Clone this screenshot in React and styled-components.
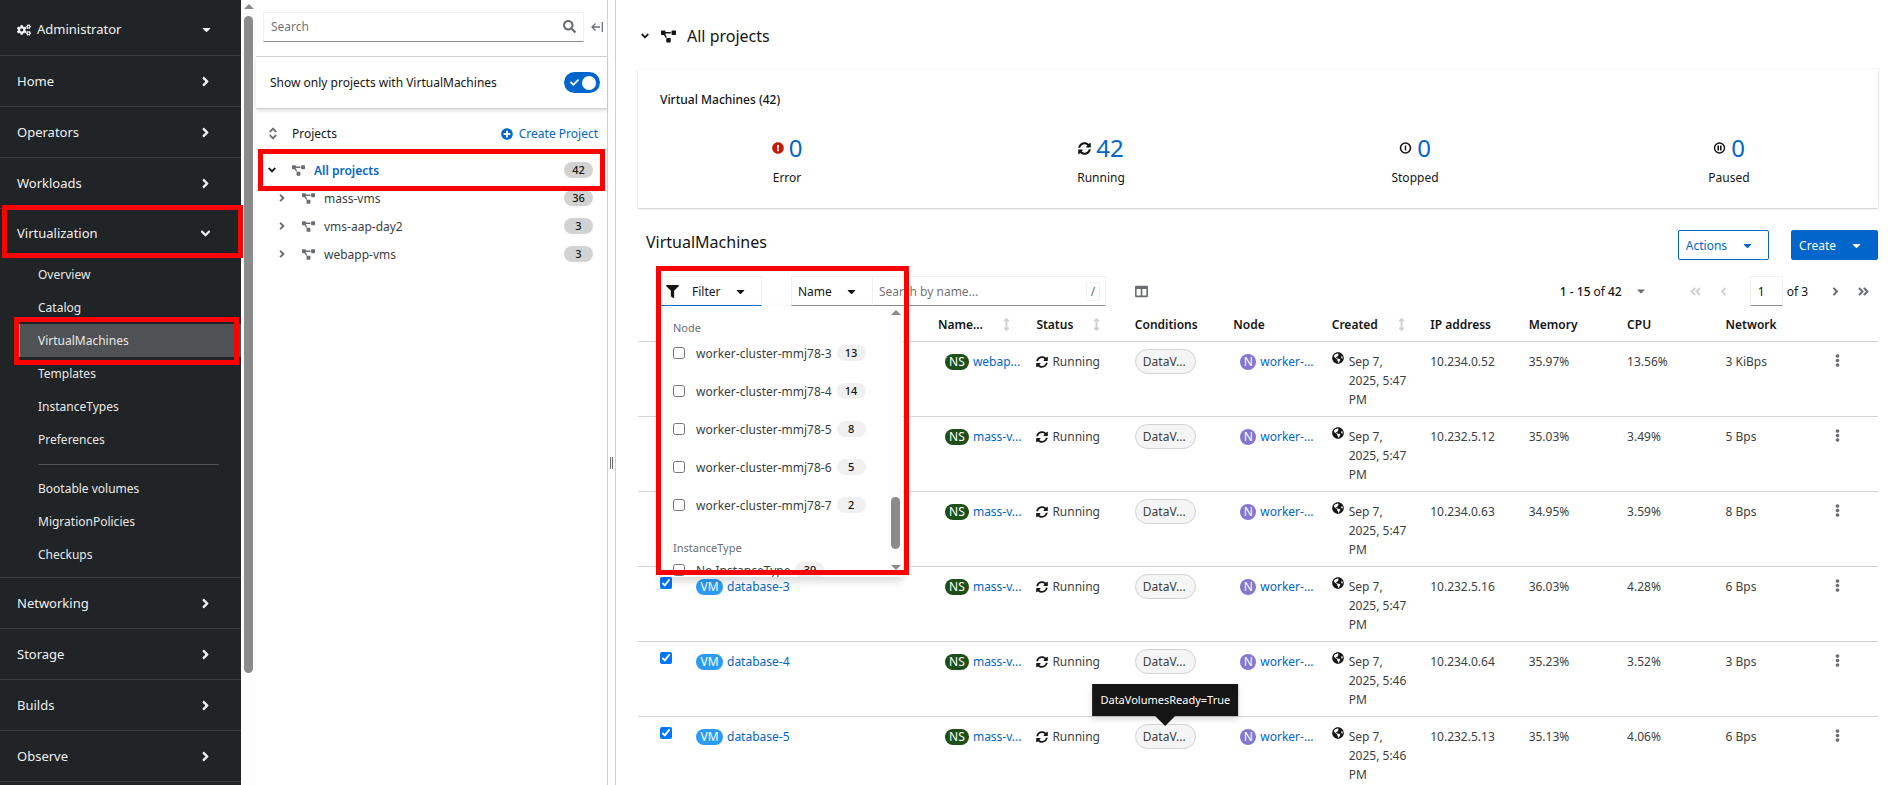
import React, { useState } from 'react';
import styled, { createGlobalStyle, css } from 'styled-components';
import {
    FaAngleDoubleLeft,
    FaAngleDoubleRight,
    FaAngleDown,
    FaAngleLeft,
    FaAngleRight,
    FaAngleUp,
    FaArrowsAltV,
    FaCaretDown,
    FaCheck,
    FaCogs,
    FaColumns,
    FaEllipsisV,
    FaExclamationCircle,
    FaFilter,
    FaGlobeAmericas,
    FaPlusCircle,
    FaProjectDiagram,
    FaSearch,
    FaSyncAlt
} from 'react-icons/fa';

const navTop = ['Home', 'Operators', 'Workloads'];
const navBottom = ['Networking', 'Storage', 'Builds', 'Observe'];
const virtLinks = ['Overview', 'Catalog', 'VirtualMachines', 'Templates', 'InstanceTypes', 'Preferences'];
const virtExtraLinks = ['Bootable volumes', 'MigrationPolicies', 'Checkups'];

const projects = [
    { name: 'mass-vms', count: 36 },
    { name: 'vms-aap-day2', count: 3 },
    { name: 'webapp-vms', count: 3 }
];

const nodes = [
    { name: 'worker-cluster-mmj78-3', count: 13 },
    { name: 'worker-cluster-mmj78-4', count: 14 },
    { name: 'worker-cluster-mmj78-5', count: 8 },
    { name: 'worker-cluster-mmj78-6', count: 5 },
    { name: 'worker-cluster-mmj78-7', count: 2 }
];

const vms = [
    { id: 1, ns: 'webap...', time: '5:47', ip: '10.234.0.52', memory: '35.97%', cpu: '13.56%', network: '3 KiBps' },
    { id: 2, ns: 'mass-v...', time: '5:47', ip: '10.232.5.12', memory: '35.03%', cpu: '3.49%', network: '5 Bps' },
    { id: 3, ns: 'mass-v...', time: '5:47', ip: '10.234.0.63', memory: '34.95%', cpu: '3.59%', network: '8 Bps' },
    { id: 4, name: 'database-3', ns: 'mass-v...', time: '5:47', ip: '10.232.5.16', memory: '36.03%', cpu: '4.28%', network: '6 Bps' },
    { id: 5, name: 'database-4', ns: 'mass-v...', time: '5:46', ip: '10.234.0.64', memory: '35.23%', cpu: '3.52%', network: '3 Bps' },
    { id: 6, name: 'database-5', ns: 'mass-v...', time: '5:46', ip: '10.232.5.13', memory: '35.13%', cpu: '4.06%', network: '6 Bps', tooltip: 'DataVolumesReady=True' }
];

const columns = [
    { label: 'Name...', sort: true },
    { label: 'Status', sort: true },
    { label: 'Conditions' },
    { label: 'Node' },
    { label: 'Created', sort: true },
    { label: 'IP address' },
    { label: 'Memory' },
    { label: 'CPU' },
    { label: 'Network' }
];

const OffIcon = () => (
    <svg width="13" height="12" viewBox="0 0 13 12" fill="none" stroke="#151515">
        <circle cx="6.5" cy="6" r="5" strokeWidth="1.6" />
        <path d="M6.5 3.5v5" strokeWidth="1.4" />
    </svg>
);

const PausedIcon = () => (
    <svg width="13" height="12" viewBox="0 0 13 12" fill="none" stroke="#151515">
        <circle cx="6.5" cy="6" r="5" strokeWidth="1.4" />
        <path d="M5.2 3.5v5M7.8 3.5v5" strokeWidth="1.6" />
    </svg>
);

const CollapseIcon = () => (
    <svg width="12" height="12" viewBox="0 0 12 12" fill="none" stroke="#6a6e73" strokeWidth="1.3">
        <path d="M9 6H1M4.5 2.5L1 6l3.5 3.5M11.3 1v10" />
    </svg>
);

const Scrollbar = ({ start, size, endArrow }) => (
    <Track>
        <Arrow />
        <Rail>
            <Spacer $grow={start} />
            <Thumb $grow={size} />
            <Spacer $grow={100 - start - size} />
        </Rail>
        {endArrow && <Arrow $down />}
    </Track>
);

const Sidebar = () => (
    <Nav>
        <Perspective>
            <FaCogs size={14} />
            <span>Administrator</span>
            <FaCaretDown size={13} />
        </Perspective>
        {navTop.map((label) => (
            <NavSection key={label}><span>{label}</span><FaAngleRight size={15} /></NavSection>
        ))}
        <NavSection $open>
            <span>Virtualization</span><FaAngleDown size={15} />
            <Highlight $top={-4} $right={-2} $bottom={0} $left={2} />
        </NavSection>
        <SubNav>
            {virtLinks.map((label) => (
                <SubLink key={label} href="#" $active={label === 'VirtualMachines'}>
                    {label}
                    {label === 'VirtualMachines' && <Highlight $top={-7} $right={2} $bottom={-8} $left={-6} />}
                </SubLink>
            ))}
            <Divider />
            {virtExtraLinks.map((label) => <SubLink key={label} href="#">{label}</SubLink>)}
        </SubNav>
        {navBottom.map((label) => (
            <NavSection key={label}><span>{label}</span><FaAngleRight size={15} /></NavSection>
        ))}
    </Nav>
);

const ProjectTree = () => {
    const [onlyVms, setOnlyVms] = useState(true);
    return (
        <TreePane>
            <TreeSearch>
                <SearchBox>
                    <input type="text" placeholder="Search" aria-label="Search projects" />
                    <FaSearch size={13} />
                </SearchBox>
                <IconButton aria-label="Collapse panel"><CollapseIcon /></IconButton>
            </TreeSearch>
            <TreeToggle>
                <label htmlFor="only-vms">Show only projects with VirtualMachines</label>
                <SwitchTrack>
                    <input id="only-vms" type="checkbox" role="switch" checked={onlyVms} onChange={() => setOnlyVms(!onlyVms)} />
                    <FaCheck size={9} />
                    <SwitchKnob />
                </SwitchTrack>
            </TreeToggle>
            <TreeHead>
                <ExpandAll aria-label="Expand all"><FaAngleUp size={12} /><FaAngleDown size={12} /></ExpandAll>
                <span>Projects</span>
                <CreateProject><FaPlusCircle size={12} />Create Project</CreateProject>
            </TreeHead>
            <TreeItem $root>
                <FaAngleDown size={12} color="#151515" />
                <FaProjectDiagram size={13} />
                <span>All projects</span>
                <Count>42</Count>
                <Highlight $top={-7} $right={2} $bottom={-7} $left={2} />
            </TreeItem>
            {projects.map((p) => (
                <TreeItem key={p.name}>
                    <FaAngleRight size={12} />
                    <FaProjectDiagram size={13} />
                    <span>{p.name}</span>
                    <Count>{p.count}</Count>
                </TreeItem>
            ))}
        </TreePane>
    );
};

const Summary = () => (
    <Card>
        <CardTitle>Virtual Machines (42)</CardTitle>
        <Stats>
            <Stat><StatLine><FaExclamationCircle size={12} color="#c9190b" /><a href="#">0</a></StatLine>Error</Stat>
            <Stat><StatLine><FaSyncAlt size={13} /><a href="#">42</a></StatLine>Running</Stat>
            <Stat><StatLine><OffIcon /><a href="#">0</a></StatLine>Stopped</Stat>
            <Stat><StatLine><PausedIcon /><a href="#">0</a></StatLine>Paused</Stat>
        </Stats>
    </Card>
);

const FilterMenu = () => (
    <Menu>
        <MenuList>
            <MenuGroup>
                <legend>Node</legend>
                {nodes.map((n) => (
                    <MenuItem key={n.name}>
                        <input type="checkbox" />{n.name}<MenuCount>{n.count}</MenuCount>
                    </MenuItem>
                ))}
            </MenuGroup>
            <MenuGroup>
                <legend>InstanceType</legend>
                <MenuItem $short><input type="checkbox" />No InstanceType<MenuCount>39</MenuCount></MenuItem>
            </MenuGroup>
        </MenuList>
        <Scrollbar start={74} size={22} endArrow />
    </Menu>
);

const Toolbar = () => (
    <Tools>
        <FilterWrap>
            <FilterToggle><FaFilter size={13} /><span>Filter</span><FaCaretDown size={13} /></FilterToggle>
            <FilterMenu />
            <Highlight $top={-10} $right={-147} $bottom={-269} $left={-4} />
        </FilterWrap>
        <SearchGroup>
            <NameToggle><span>Name</span><FaCaretDown size={13} /></NameToggle>
            <NameSearch>
                <input type="text" placeholder="Search by name..." aria-label="Search by name" />
                <kbd>/</kbd>
            </NameSearch>
        </SearchGroup>
        <IconButton aria-label="Manage columns"><FaColumns size={13} /></IconButton>
        <Pager>
            <PerPage><b>1 - 15</b> of <b>42</b><FaCaretDown size={12} /></PerPage>
            <PageButton disabled aria-label="First page"><FaAngleDoubleLeft size={13} /></PageButton>
            <PageButton disabled aria-label="Previous page"><FaAngleLeft size={13} /></PageButton>
            <PageInput defaultValue="1" aria-label="Current page" />
            <span>of 3</span>
            <PageButton aria-label="Next page"><FaAngleRight size={13} /></PageButton>
            <PageButton aria-label="Last page"><FaAngleDoubleRight size={13} /></PageButton>
        </Pager>
    </Tools>
);

const VmRow = ({ vm }) => (
    <tr>
        <td>{vm.name && <RowCheck type="checkbox" defaultChecked aria-label={`Select ${vm.name}`} />}</td>
        <td>{vm.name && <Resource><Badge $color="#2b9af3" $width={27}>VM</Badge><a href="#">{vm.name}</a></Resource>}</td>
        <td><Resource $indent><Badge $color="#1e4f18" $width={24}>NS</Badge><a href="#">{vm.ns}</a></Resource></td>
        <td><Status><FaSyncAlt size={12} />Running</Status></td>
        <ConditionCell>
            <Condition>
                DataV...
                {vm.tooltip && <Tooltip role="tooltip">{vm.tooltip}</Tooltip>}
            </Condition>
        </ConditionCell>
        <td><Resource $indent><Badge $color="#8476d1" $width={16}>N</Badge><a href="#">worker-...</a></Resource></td>
        <td><Created><FaGlobeAmericas size={12} /><span>Sep 7,<br />2025, {vm.time}<br />PM</span></Created></td>
        <td>{vm.ip}</td>
        <td>{vm.memory}</td>
        <td>{vm.cpu}</td>
        <td>{vm.network}</td>
        <td><Kebab aria-label="Row actions"><FaEllipsisV size={13} /></Kebab></td>
    </tr>
);

const App = () => (
    <>
        <GlobalStyle />
        <Page>
            <Sidebar />
            <Scrollbar start={0} size={87} />
            <ProjectTree />
            <Splitter><i /><i /></Splitter>
            <Main>
                <ProjectHeader>
                    <FaAngleDown size={12} />
                    <FaProjectDiagram size={15} />
                    <h1>All projects</h1>
                </ProjectHeader>
                <Summary />
                <ListHeader>
                    <h2>VirtualMachines</h2>
                    <ActionButton>Actions<FaCaretDown size={13} /></ActionButton>
                    <ActionButton $primary>Create<FaCaretDown size={13} /></ActionButton>
                </ListHeader>
                <Toolbar />
                <Table>
                    <colgroup>
                        <col className="check" />
                        <col />
                        {columns.map((c) => <col key={c.label} className="data" />)}
                        <col className="actions" />
                    </colgroup>
                    <thead>
                        <tr>
                            <td />
                            <td />
                            {columns.map((c) => (
                                <th key={c.label} scope="col">
                                    <HeadLabel>{c.label}{c.sort && <FaArrowsAltV size={13} />}</HeadLabel>
                                </th>
                            ))}
                            <td />
                        </tr>
                    </thead>
                    <tbody>
                        {vms.map((vm) => <VmRow key={vm.id} vm={vm} />)}
                    </tbody>
                </Table>
            </Main>
        </Page>
    </>
);

export default App;

const GlobalStyle = createGlobalStyle`
* { box-sizing:border-box; }
body {
    margin:0;
    background:#fff;
    color:#151515;
    font-family:'Noto Sans', 'Open Sans', sans-serif;
    font-size:12px;
    line-height:19px;
}
button, input { font:inherit; color:inherit; }
input::placeholder { color:#757575; }
button {
    display:flex;
    align-items:center;
    padding:0;
    border:0;
    background:none;
    cursor:pointer;
}
svg { flex:none; display:block; }
a { color:#0066cc; text-decoration:none; }
`;

const Page = styled.div`
display:flex;
height:100vh;
overflow:hidden;
`;

/* red frames that call out a region */
const Highlight = styled.div`
position:absolute;
top:${p => p.$top}px;
right:${p => p.$right}px;
bottom:${p => p.$bottom}px;
left:${p => p.$left}px;
border:5px solid #ff0000;
z-index:10;
pointer-events:none;
`;

const Track = styled.div`
display:flex;
flex-direction:column;
flex:none;
width:15px;
padding:4px 2px 7px 3px;
background:#fcfcfc;
`;

const Arrow = styled.div`
align-self:center;
border:5px solid transparent;
border-top-width:0;
border-bottom:5px solid #8b8b8b;
${p => p.$down && css`transform:rotate(180deg);`}
`;

const Rail = styled.div`
display:flex;
flex-direction:column;
flex:1;
margin:7px 0;
`;

const Spacer = styled.div`
flex:${p => p.$grow} 0 0;
`;

const Thumb = styled.div`
flex:${p => p.$grow} 0 0;
width:9px;
border-radius:5px;
background:#8b8b8b;
`;

const Nav = styled.nav`
flex:none;
width:241px;
background:#212427;
color:#f0f0f0;
position:relative;
z-index:1;
`;

const Perspective = styled.button`
width:100%;
height:56px;
padding:4px 28px 0 17px;
border-bottom:1px solid #3c3f42;
font-size:13px;
>span {
    flex:1;
    margin-left:6px;
    text-align:left;
}
`;

const NavSection = styled.button`
position:relative;
justify-content:space-between;
width:100%;
height:${p => p.$open ? 49 : 51}px;
padding:0 28px 0 17px;
border-bottom:${p => p.$open ? 0 : 1}px solid #3c3f42;
font-size:13px;
`;

const SubNav = styled.div`
padding:0 0 6px 19px;
border-bottom:1px solid #3c3f42;
`;

const SubLink = styled.a`
display:block;
position:relative;
padding:7px 0 7px 18px;
border-left:1px solid transparent;
color:#e8e8e8;
${p => p.$active && css`
    background:#4f5255;
    border-left-color:#73bcf7;
`}
`;

const Divider = styled.hr`
margin:8px 22px 7px 19px;
border:0;
border-top:1px solid #4f5255;
`;

const TreePane = styled.section`
flex:none;
width:352px;
border-right:1px solid #d2d2d2;
color:#151515;
`;

const TreeSearch = styled.div`
display:flex;
align-items:center;
justify-content:space-between;
height:57px;
padding:0 4px 3px 7px;
border-bottom:1px solid #d2d2d2;
`;

const fieldBorder = css`
border:1px solid #f0f0f0;
border-bottom-color:#8a8d90;
`;

const SearchBox = styled.div`
display:flex;
align-items:center;
width:321px;
height:30px;
padding:0 7px;
color:#6a6e73;
${fieldBorder}
>input {
    flex:1;
    min-width:0;
    padding:0;
    border:0;
    outline:0;
}
`;

const IconButton = styled.button`
color:#6a6e73;
`;

const TreeToggle = styled.div`
display:flex;
align-items:center;
justify-content:space-between;
height:52px;
padding:0 7px 0 14px;
border-bottom:1px solid #d2d2d2;
box-shadow:0 2px 3px rgba(3, 3, 3, 0.12);
`;

const SwitchTrack = styled.span`
position:relative;
display:flex;
align-items:center;
justify-content:space-between;
width:36px;
height:21px;
padding:0 4px 0 6px;
border-radius:11px;
background:#0066cc;
color:#fff;
>input {
    position:absolute;
    inset:0;
    width:100%;
    height:100%;
    margin:0;
    opacity:0;
}
`;

const SwitchKnob = styled.i`
width:14px;
height:14px;
border-radius:50%;
background:#fff;
`;

const TreeHead = styled.div`
display:flex;
align-items:center;
height:47px;
padding:2px 9px 0 11px;
>span { flex:1; margin-left:13px; }
`;

const ExpandAll = styled.button`
flex-direction:column;
color:#6a6e73;
>svg + svg { margin-top:-5px; }
`;

const CreateProject = styled.button`
gap:6px;
color:#0066cc;
`;

const TreeItem = styled.div`
display:flex;
align-items:center;
gap:14px;
position:relative;
height:28px;
padding:0 14px 0 ${p => p.$root ? 10 : 20}px;
color:#6a6e73;
>span {
    color:#3c3f42;
    margin-left:-5px;
}
${p => p.$root && css`
    >span { color:#0066cc; font-weight:600; }
`}
`;

const Count = styled.b`
width:29px;
margin-left:auto;
border-radius:8px;
background:#d2d2d2;
color:#151515;
font-size:11px;
font-weight:500;
line-height:16px;
text-align:center;
`;

const Splitter = styled.div`
display:flex;
align-items:center;
justify-content:center;
gap:1px;
flex:none;
width:8px;
padding-top:140px;
border-right:1px solid #d2d2d2;
>i {
    width:1px;
    height:12px;
    background:#6a6e73;
}
`;

const Main = styled.main`
flex:1;
min-width:0;
padding:0 23px 0 22px;
`;

const ProjectHeader = styled.header`
display:flex;
align-items:center;
height:69px;
padding:3px 0 0 1px;
>svg + svg { margin-left:10px; }
>h1 {
    margin:0 0 0 11px;
    font-size:16px;
    font-weight:400;
}
`;

const Card = styled.section`
padding:21px 16px 20px;
box-shadow:0 1px 2px rgba(3, 3, 3, 0.18), 0 0 2px rgba(3, 3, 3, 0.08);
`;

const CardTitle = styled.h3`
margin:0 0 23px 6px;
font-size:12px;
font-weight:500;
line-height:20px;
`;

const Stats = styled.div`
display:grid;
grid-template-columns:repeat(4, 1fr);
gap:48px;
`;

const Stat = styled.div`
line-height:20px;
text-align:center;
`;

const StatLine = styled.div`
display:flex;
align-items:center;
justify-content:center;
gap:5px;
margin-bottom:5px;
font-size:24px;
line-height:30px;
`;

const ListHeader = styled.div`
display:flex;
align-items:flex-start;
gap:22px;
margin-top:22px;
padding-left:8px;
>h2 {
    flex:1;
    margin:0;
    font-size:16px;
    font-weight:400;
    line-height:24px;
}
`;

const ActionButton = styled.button`
justify-content:space-between;
gap:14px;
height:30px;
padding:0 14px 0 7px;
border:1px solid #0066cc;
border-radius:2px;
background:${p => p.$primary ? '#0066cc' : '#fff'};
color:${p => p.$primary ? '#fff' : '#0066cc'};
`;

const Tools = styled.div`
display:flex;
align-items:center;
margin-top:16px;
padding:0 8px 0 22px;
gap:29px;
`;

const FilterWrap = styled.div`
position:relative;
width:102px;
`;

const FilterToggle = styled.button`
width:100%;
height:30px;
padding:0 14px 0 5px;
${fieldBorder}
border-bottom-color:#0066cc;
>span { margin:0 auto 0 13px; }
`;

const Menu = styled.div`
display:flex;
position:absolute;
top:100%;
left:0;
z-index:5;
width:243px;
height:271px;
overflow:hidden;
background:#fff;
box-shadow:0 4px 8px rgba(3, 3, 3, 0.16);
`;

const MenuList = styled.div`
flex:1;
`;

const MenuGroup = styled.fieldset`
margin:0;
padding:0 0 2px;
border:0;
>legend {
    padding:16px 13px 0;
    color:#6a6e73;
    font-size:11px;
    line-height:12px;
}
`;

const MenuItem = styled.label`
display:flex;
align-items:center;
height:${p => p.$short ? 32 : 38}px;
padding-left:13px;
color:#3c3f42;
>input {
    width:12px;
    height:12px;
    margin:0 11px 0 0;
}
`;

const MenuCount = styled(Count)`
margin-left:5px;
background:#f0f0f0;
`;

const SearchGroup = styled.div`
display:flex;
`;

const NameToggle = styled.button`
justify-content:space-between;
width:82px;
height:30px;
padding:0 14px 0 6px;
${fieldBorder}
`;

const NameSearch = styled.div`
display:flex;
align-items:center;
width:233px;
height:30px;
padding:0 5px 0 6px;
${fieldBorder}
border-left:0;
>input {
    flex:1;
    min-width:0;
    padding:0;
    border:0;
    outline:0;
}
>kbd {
    width:14px;
    border:1px solid #f0f0f0;
    border-radius:2px;
    color:#6a6e73;
    font-family:inherit;
    line-height:17px;
    text-align:center;
}
`;

const Pager = styled.div`
display:flex;
align-items:center;
margin-left:auto;
>span { margin:0 21px 0 4px; }
`;

const PerPage = styled.button`
gap:3px;
margin-right:42px;
>b { font-weight:500; }
>svg { margin-left:10px; color:#6a6e73; }
`;

const PageButton = styled.button`
color:#6a6e73;
& + & { margin-left:15px; }
&:disabled { color:#d2d2d2; }
`;

const PageInput = styled.input`
width:33px;
height:30px;
margin-left:20px;
padding:0 7px;
outline:0;
${fieldBorder}
`;

const Table = styled.table`
width:100%;
table-layout:fixed;
border-collapse:collapse;
color:#3c3f42;
col.check { width:50px; }
col.data { width:7.94%; }
col.actions { width:62px; }
td, th {
    padding:10px 0 7px 8px;
    border-bottom:1px solid #d2d2d2;
    text-align:left;
    vertical-align:top;
    white-space:nowrap;
}
td:first-child { padding-left:22px; }
thead td, thead th { padding:9px 0 7px 8px; }
th { color:#151515; font-weight:600; }
`;

const HeadLabel = styled.div`
display:flex;
align-items:center;
gap:17px;
>svg { color:#d2d2d2; }
`;

const RowCheck = styled.input`
display:block;
width:12px;
height:12px;
margin:0;
`;

const Resource = styled.div`
display:flex;
align-items:center;
gap:4px;
margin-left:${p => p.$indent ? 7 : 0}px;
`;

const Badge = styled.span`
width:${p => p.$width}px;
border-radius:8px;
background:${p => p.$color};
color:#fff;
line-height:16px;
text-align:center;
`;

const Status = styled.div`
display:flex;
align-items:center;
gap:4px;
>svg { color:#151515; }
`;

const ConditionCell = styled.td`
&& { padding-top:7px; }
`;

const Condition = styled.div`
position:relative;
width:61px;
padding-left:7px;
border:1px solid #d2d2d2;
border-radius:13px;
background:#f5f5f5;
line-height:23px;
`;

const Tooltip = styled.div`
position:absolute;
bottom:calc(100% + 9px);
left:50%;
transform:translateX(-50%);
padding:7px 8px;
background:#151515;
box-shadow:0 3px 6px rgba(3, 3, 3, 0.16);
color:#fff;
font-size:11px;
line-height:18px;
&::after {
    content:'';
    position:absolute;
    top:100%;
    left:50%;
    margin-left:-10px;
    border:10px solid transparent;
    border-bottom-width:0;
    border-top-color:#151515;
}
`;

const Created = styled.div`
display:flex;
gap:5px;
>svg { color:#151515; }
`;

const Kebab = styled.button`
justify-content:center;
width:26px;
height:16px;
color:#6a6e73;
`;
